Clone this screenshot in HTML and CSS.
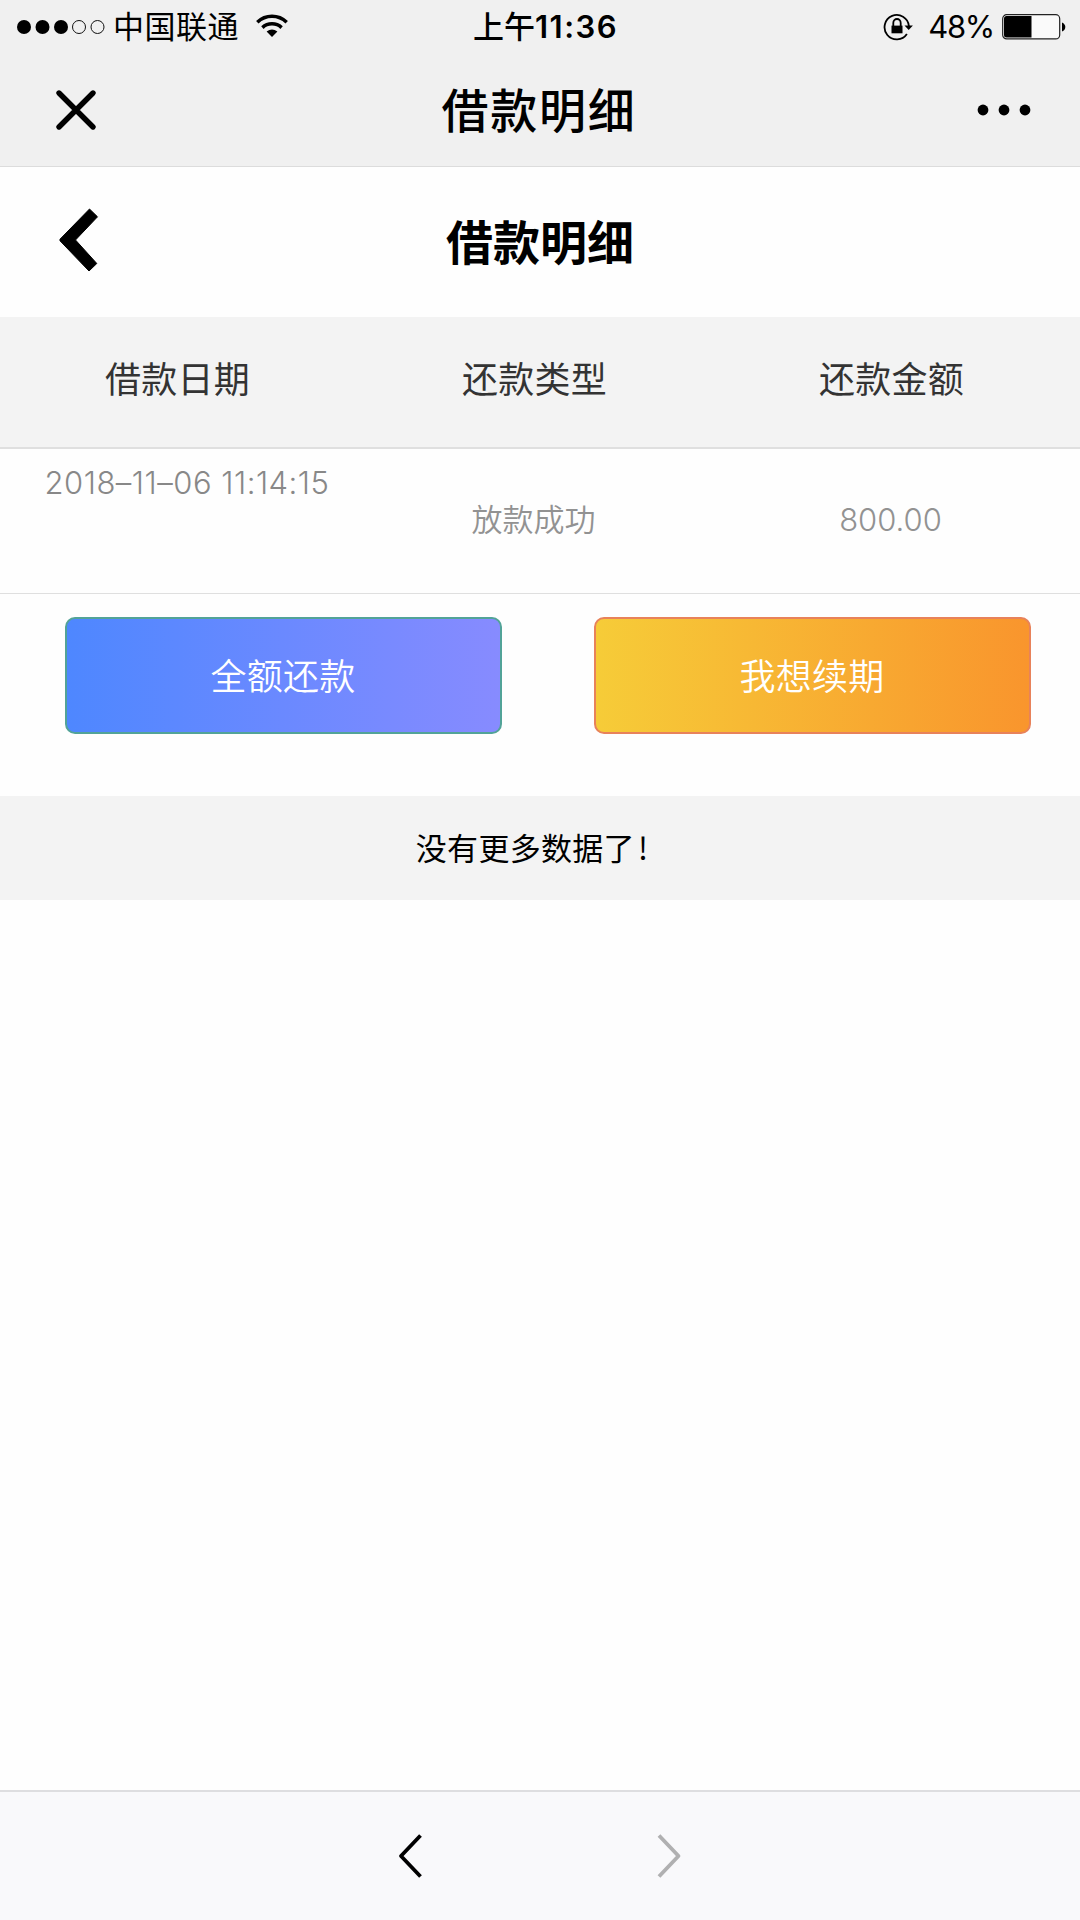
FILE: index.html
```html
<!DOCTYPE html>
<html lang="zh-CN">
<head>
<meta charset="utf-8">
<title>借款明细</title>
<link rel="stylesheet" href="styles.css">
</head>
<body>
<div class="screen">
  <header class="top">
    <div class="status">
      <div class="status-left">
        <svg class="signal" width="90" height="16" viewBox="0 0 90 16"><g fill="#000"><circle cx="8" cy="8" r="7"/><circle cx="26.5" cy="8" r="7"/><circle cx="45" cy="8" r="7"/></g><g fill="none" stroke="#111" stroke-width="1"><circle cx="63" cy="8" r="6.5"/><circle cx="81.5" cy="8" r="6.5"/></g></svg>
        <span class="carrier">中国联通</span>
        <svg class="wifi" width="32" height="24" viewBox="0 0 32 24"><g fill="none" stroke="#000" stroke-width="3.5"><path d="M1.3 8.2C9.6 .2 22.4 .2 30.7 8.2"/><path d="M6.4 13.6C11.8 8.6 20.2 8.6 25.6 13.6"/></g><path d="M10.6 17.6Q16 13.4 21.4 17.6L16 23Z"/></svg>
      </div>
      <div class="time">上午<b>11:36</b></div>
      <div class="status-right">
        <svg class="lock" width="30" height="28" viewBox="0 0 30 28"><path d="M23.9 21A12.2 12.2 0 1 1 25.9 13" fill="none" stroke="#000" stroke-width="1.8"/><path d="M21.5 12.5h8.4l-4.2 4.6z"/><path d="M8.5 12.6h11v7.7h-11z"/><path d="M10.3 13V10a3.7 4 0 0 1 7.4 0v3" fill="none" stroke="#000" stroke-width="1.8"/></svg>
        <span class="percent">48%</span>
        <svg class="battery" width="64" height="26" viewBox="0 0 64 26"><rect x=".7" y=".7" width="57" height="24.2" rx="4" fill="#fafafa" stroke="#222" stroke-width="1.2"/><path d="M4.5 2H29.5V23.5H4.5Q2 23.5 2 21V4.5Q2 2 4.5 2Z"/><path d="M60 8.5Q63.3 10 63.3 13T60 17.5Z"/></svg>
      </div>
    </div>
    <div class="nav">
      <svg class="close" width="42" height="42" viewBox="0 0 42 42"><path d="M4 4L38 38M38 4L4 38" stroke="#000" stroke-width="5.4" stroke-linecap="round"/></svg>
      <h1 class="nav-title">借款明细</h1>
      <svg class="more" width="54" height="12" viewBox="0 0 54 12"><circle cx="6" cy="6" r="5.4"/><circle cx="27" cy="6" r="5.4"/><circle cx="48" cy="6" r="5.4"/></svg>
    </div>
  </header>
  <div class="page-head">
    <svg class="back" width="40" height="64" viewBox="0 0 40 64"><path d="M30.5 1L38.5 8.8L16.5 32L37.8 55.5L30 63L1 32.8V31.2Z" stroke="#000" stroke-linejoin="round"/></svg>
    <h2 class="page-title">借款明细</h2>
    <span></span>
  </div>
  <div class="columns table-head"><span>借款日期</span><span>还款类型</span><span>还款金额</span></div>
  <div class="columns table-row"><span class="date">2018–11–06 11:14:15</span><span class="kind">放款成功</span><span class="amount">800.00</span></div>
  <div class="actions">
    <button class="btn repay">全额还款</button>
    <button class="btn extend">我想续期</button>
  </div>
  <p class="end">没有更多数据了<span class="mark">!</span></p>
  <footer class="toolbar">
    <svg width="26" height="46" viewBox="0 0 26 46"><path d="M22.5 2.5L3 23L22.5 43.5" fill="none" stroke="#000" stroke-width="3.8" stroke-linejoin="round"/></svg>
    <svg width="26" height="46" viewBox="0 0 26 46"><path d="M3 2.5L22.5 23L3 43.5" fill="none" stroke="#b0b0b1" stroke-width="3.8" stroke-linejoin="round"/></svg>
  </footer>
</div>
</body>
</html>
```
FILE: styles.css
```css
* { box-sizing: border-box; }
body {
  margin: 0;
  font-family: Inter, "Noto Sans CJK SC", sans-serif;
  color: #000;
  background: #fff;
}
svg { display: block; flex: none; }
h1, h2, p { margin: 0; }
.screen {
  width: 1080px;
  height: 1920px;
  display: flex;
  flex-direction: column;
  background: #fefefe;
}
.top {
  height: 167px;
  background: #f0f0f0;
  border-bottom: 1px solid #dcdcdc;
}
.status {
  height: 53px;
  display: grid;
  grid-template-columns: 1fr auto 1fr;
  align-items: center;
  padding: 0 14px 0 16px;
  font-size: 31px;
  line-height: 53px;
  white-space: nowrap;
}
.status-left, .status-right { display: flex; align-items: center; }
.status-right { justify-content: flex-end; }
.carrier { margin-left: 7px; letter-spacing: 0.5px; }
.wifi { margin-left: 17px; margin-top: -2px; }
.time { font-weight: 500; padding: 0 0 0 9px; }
.time b { font-weight: 600; letter-spacing: 1.5px; }
.percent { margin-left: 15px; margin-right: 8px; letter-spacing: -1.3px; }
.nav {
  height: 113px;
  display: grid;
  grid-template-columns: 1fr auto 1fr;
  align-items: center;
  padding: 0 49px 0 55px;
}
.more { justify-self: end; }
.nav-title {
  padding: 0 8px 4px 0;
  font-size: 47px;
  font-weight: 500;
  letter-spacing: 1.7px;
}
.page-head {
  height: 150px;
  display: grid;
  grid-template-columns: 1fr auto 1fr;
  align-items: center;
  padding: 0 59px 4px;
}
.page-title { padding-bottom: 2px; font-size: 47px; font-weight: 700; }
.columns {
  display: grid;
  grid-template-columns: repeat(3, 357px);
  text-align: center;
}
.table-head {
  height: 132px;
  padding-top: 37px;
  background: #f3f3f3;
  border-bottom: 2px solid #dfdfdf;
  font-size: 36px;
  line-height: 52px;
  letter-spacing: 0.3px;
  color: #333;
}
.table-head span { padding-right: 2px; }
.table-row {
  height: 145px;
  border-bottom: 1px solid #dfdfdf;
  font-size: 31px;
  font-weight: 350;
  line-height: 44px;
  color: #929292;
}
.date { padding: 12px 0 0 17px; white-space: nowrap; font-weight: 300; color: #888; letter-spacing: 0.5px; }
.kind, .amount { padding: 49px 4px 0 0; }
.actions {
  height: 202px;
  display: flex;
  gap: 92px;
  padding: 23px 0 0 65px;
}
.btn {
  width: 437px;
  height: 117px;
  padding: 3px 1px 0 0;
  border-radius: 10px;
  font: 350 36px/1 Inter, "Noto Sans CJK SC", sans-serif;
  letter-spacing: 0.3px;
  color: #fff;
}
.repay { border: 2px solid #52a398; background: linear-gradient(90deg, #4e87ff, #878bff); }
.extend { border: 2px solid #e8825a; background: linear-gradient(90deg, #f6cc38, #f9952d); }
.end {
  height: 104px;
  padding-right: 16px;
  background: #f3f3f3;
  font-size: 31px;
  line-height: 101px;
  letter-spacing: 0.3px;
  text-align: center;
}
.mark { margin-left: 3px; font-family: "Noto Sans CJK SC", sans-serif; }
.toolbar {
  height: 130px;
  margin-top: auto;
  display: flex;
  justify-content: center;
  align-items: center;
  gap: 232px;
  padding-bottom: 1px;
  border-top: 2px solid #dedee0;
  background: #f9f9fb;
}
```
